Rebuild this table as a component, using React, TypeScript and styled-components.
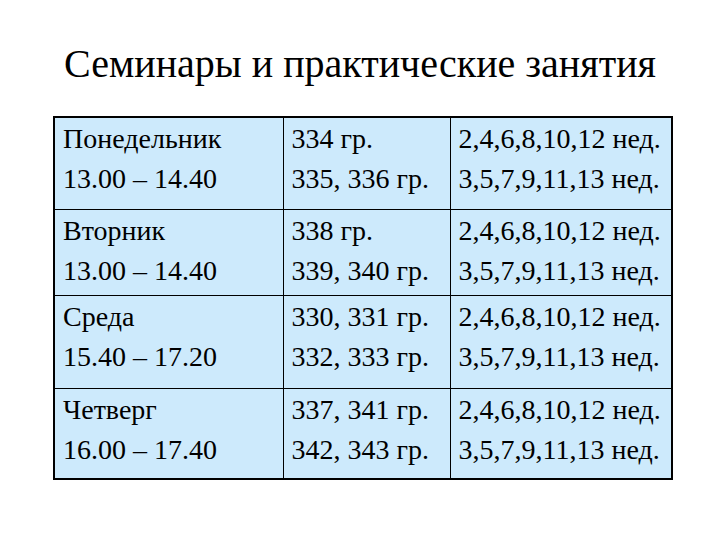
import styled, { createGlobalStyle } from 'styled-components';

const rows = [
  { day: 'Понедельник', time: '13.00 – 14.40', groups: ['334 гр.', '335, 336 гр.'], height: 92 },
  { day: 'Вторник', time: '13.00 – 14.40', groups: ['338 гр.', '339, 340 гр.'], height: 86 },
  { day: 'Среда', time: '15.40 – 17.20', groups: ['330, 331 гр.', '332, 333 гр.'], height: 93 },
  { day: 'Четверг', time: '16.00 – 17.40', groups: ['337, 341 гр.', '342, 343 гр.'], height: 91 },
];

const weeks = ['2,4,6,8,10,12 нед.', '3,5,7,9,11,13 нед.'];

const GlobalStyle = createGlobalStyle`
  body {
    margin: 0;
    background: #ffffff;
    color: #000;
    font-family: "Liberation Serif", "Times New Roman", serif;
  }
`;

const Slide = styled.div`
  width: 720px;
  height: 540px;
  overflow: hidden;
  box-sizing: border-box;
  padding-top: 42px;
`;

const Title = styled.h1`
  margin: 0;
  text-align: center;
  font-family: "Liberation Serif", "Times New Roman", serif;
  font-weight: normal;
  font-size: 40px;
  line-height: 44px;
`;

const Table = styled.table`
  margin: 30px 0 0 53px;
  border-collapse: collapse;
  border: 2px solid #000;
  background: #cdeafc;
`;

const Row = styled.tr<{ $h: number }>`
  height: ${({ $h }) => $h}px;
`;

const Cell = styled.td<{ $w: number }>`
  width: ${({ $w }) => $w}px;
  box-sizing: border-box;
  border: 1px solid #000;
  padding: 1px 0 0 8px;
  vertical-align: top;
  font-family: "Liberation Serif", "Times New Roman", serif;
  font-size: 28px;
  line-height: 40px;
  white-space: nowrap;
`;

const Line = styled.div``;

export default function App() {
  return (
    <>
      <GlobalStyle />
      <Slide>
        <Title>Семинары и практические занятия</Title>
        <Table>
          <tbody>
            {rows.map((r) => (
              <Row key={r.day} $h={r.height}>
                <Cell $w={229}>
                  <Line>{r.day}</Line>
                  <Line>{r.time}</Line>
                </Cell>
                <Cell $w={167}>
                  {r.groups.map((g) => (
                    <Line key={g}>{g}</Line>
                  ))}
                </Cell>
                <Cell $w={222}>
                  {weeks.map((w) => (
                    <Line key={w}>{w}</Line>
                  ))}
                </Cell>
              </Row>
            ))}
          </tbody>
        </Table>
      </Slide>
    </>
  );
}
